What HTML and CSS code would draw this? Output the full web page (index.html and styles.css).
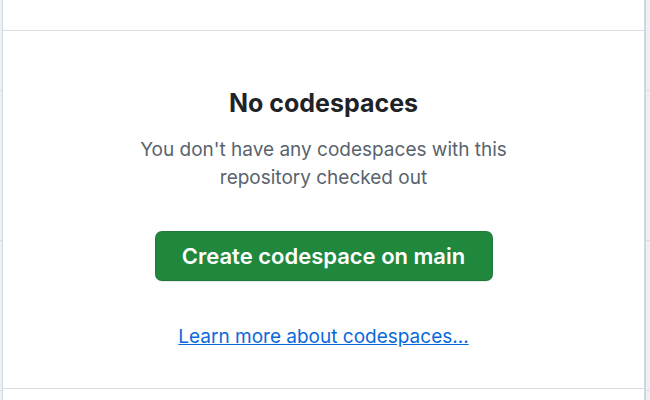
FILE: index.html
```html
<!DOCTYPE html>
<html lang="en">
<head>
<meta charset="UTF-8" />
<title>Codespaces</title>
<link rel="stylesheet" href="styles.css">
</head>
<body>
  <div class="panel">
    <div class="panel-header"></div>
    <div class="blankslate">
      <h2 class="blankslate-title">No codespaces</h2>
      <p class="blankslate-text">You don't have any codespaces with this repository checked out</p>
      <button class="btn-primary">Create codespace on main</button>
      <a class="blankslate-link" href="#">Learn more about codespaces...</a>
    </div>
    <div class="panel-footer"></div>
  </div>
</body>
</html>
```

FILE: styles.css
```css
* {
  box-sizing: border-box;
}
body {
  margin: 0;
  height: 400px;
  overflow: hidden;
  background-color: #eef1f4;
  background-image: repeating-linear-gradient(to bottom, transparent 0, transparent 90px, #d8dee4 90px, #d8dee4 91px, transparent 91px, transparent 150px);
  font-family: Inter, "Liberation Sans", sans-serif;
  color: #1f2328;
}
.panel {
  margin: 0 4px 0 2px;
  height: 400px;
  background: #fff;
  border-left: 1px solid #d0d7de;
  border-right: 2px solid #d0d7de;
  display: flex;
  flex-direction: column;
}
.panel-header {
  height: 31px;
  border-bottom: 1px solid #d8dee4;
}
.blankslate {
  height: 358px;
  border-bottom: 1px solid #d8dee4;
  display: flex;
  flex-direction: column;
  align-items: center;
  text-align: center;
  padding-top: 57px;
}
.blankslate-title {
  margin: 0;
  font-size: 25px;
  font-weight: 700;
  line-height: 30px;
}
.blankslate-text {
  margin: 18px 0 0;
  width: 390px;
  font-size: 19px;
  line-height: 28px;
  color: #59636e;
}
.btn-primary {
  margin-top: 39px;
  width: 338px;
  height: 50px;
  border: 1px solid rgba(31, 35, 40, 0.15);
  border-radius: 7px;
  background: #1f883d;
  color: #fff;
  font-family: inherit;
  font-size: 22px;
  font-weight: 600;
  box-shadow: 0 1px 0 rgba(31, 35, 40, 0.1);
}
.blankslate-link {
  margin-top: 44px;
  font-size: 19px;
  color: #0969da;
  text-decoration: underline;
}
```
